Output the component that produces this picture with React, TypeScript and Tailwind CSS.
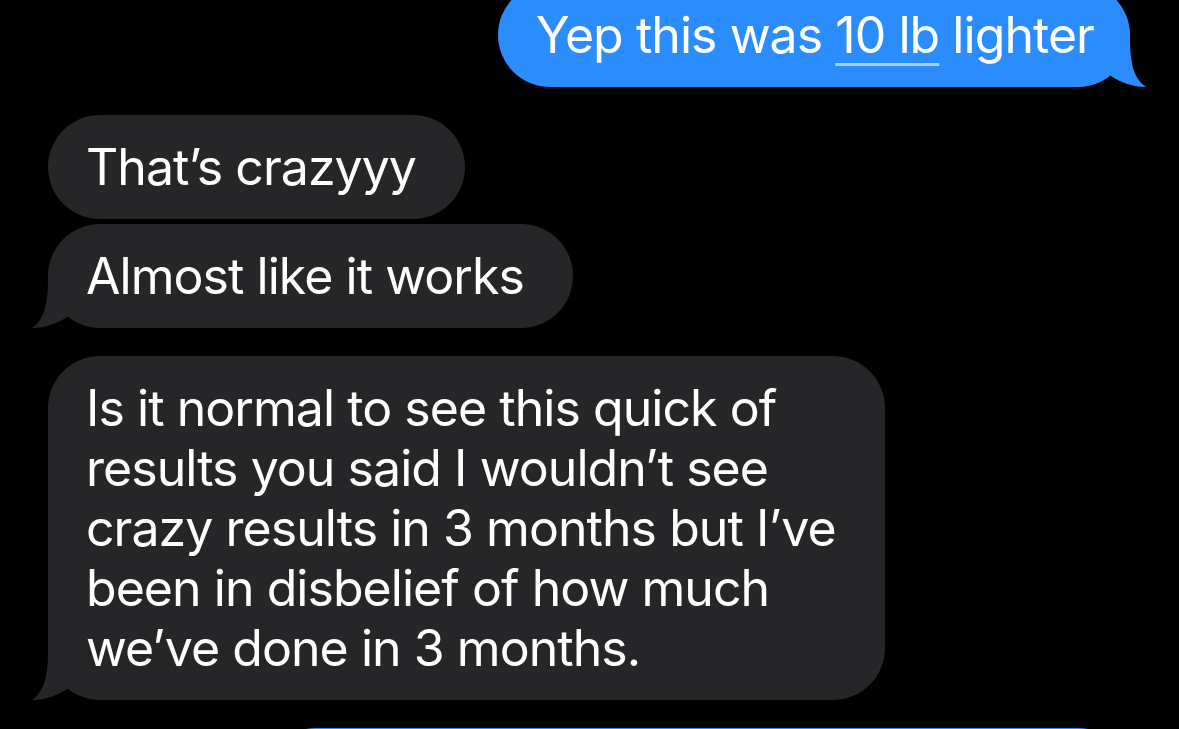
import React from "react";

const GRAY = "#262629";
const BLUE = "#2b8cfe";

function TailLeft() {
  return (
    <svg className="absolute left-[-20px] bottom-0 w-[52px] h-[52px]" viewBox="0 0 52 52">
      <path d="M20,0 C20,25 18,42 4,52 C18,52 30,47 39,41 L52,25 L52,0 Z" fill={GRAY} />
    </svg>
  );
}

function TailRight() {
  return (
    <svg className="absolute right-[-20px] bottom-0 w-[52px] h-[52px]" viewBox="0 0 52 52">
      <path d="M32,0 C32,25 34,42 48,52 C34,52 22,47 13,41 L0,25 L0,0 Z" fill={BLUE} />
    </svg>
  );
}

function Received({ children, tail }: { children: React.ReactNode; tail?: boolean }) {
  return (
    <div className="self-start ml-[48px] relative">
      <div className="relative z-10 rounded-[52px] bg-[#262629] py-[22px] pl-[38px] pr-[49px] whitespace-nowrap">
        {children}
      </div>
      {tail && <TailLeft />}
    </div>
  );
}

export default function App() {
  return (
    <div className="h-screen w-full overflow-hidden bg-black text-white font-['Inter','Noto_Sans',sans-serif] text-[50px] leading-[60px] tracking-[-0.95px]">
      <div className="flex flex-col -mt-[17px]">
        {/* sent */}
        <div className="self-end mr-[49px] relative">
          <div className="relative z-10 rounded-[52px] bg-[#2b8cfe] py-[22px] pl-[38px] pr-[36px] whitespace-nowrap">
            Yep this was{" "}
            <span className="underline decoration-white/60 decoration-[3px] underline-offset-[10px]">10 lb</span>{" "}
            lighter
          </div>
          <TailRight />
        </div>

        <div className="mt-[28px] flex flex-col gap-[5px]">
          <Received>That’s crazyyy</Received>
          <Received tail>Almost like it works</Received>
        </div>

        <div className="mt-[28px] flex flex-col">
          <Received tail>
            Is it normal to see this quick of
            <br />
            results you said I wouldn’t see
            <br />
            crazy results in 3 months but I’ve
            <br />
            been in disbelief of how much
            <br />
            we’ve done in 3 months.
          </Received>
        </div>

        <div className="mt-[28px] self-end mr-[49px] w-[866px] h-[104px] rounded-[52px] bg-[#2b8cfe]" />
      </div>
    </div>
  );
}
